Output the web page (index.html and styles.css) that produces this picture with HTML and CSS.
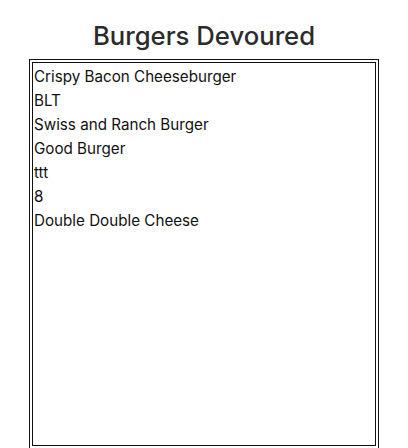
FILE: index.html
```html
<!DOCTYPE html>
<html>
<head>
<meta charset="utf-8">
<link rel="stylesheet" href="styles.css">
</head>
<body>
<h1 class="title">Burgers Devoured</h1>
<div class="outer">
  <div class="inner">
    <ul class="list">
      <li>Crispy Bacon Cheeseburger</li>
      <li>BLT</li>
      <li>Swiss and Ranch Burger</li>
      <li>Good Burger</li>
      <li>ttt</li>
      <li>8</li>
      <li>Double Double Cheese</li>
    </ul>
  </div>
</div>
</body>
</html>
```
FILE: styles.css
```css
html, body {
  margin: 0;
  padding: 0;
  background: #fff;
}
body {
  font-family: Inter, "Liberation Sans", sans-serif;
  color: #000;
  display: flex;
  flex-direction: column;
  align-items: center;
  overflow: hidden;
}
.title {
  margin: 20px 0 0 0;
  font-size: 25.7px;
  font-weight: 500;
  color: #2b2b2b;
  line-height: 32px;
  height: 39px;
}
.outer {
  width: 344px;
  border: 1px solid #111;
  padding: 2px;
  height: 384px;
}
.inner {
  border: 1px solid #111;
  height: 100%;
  box-sizing: border-box;
  padding: 2px 1px 0 1px;
}
.list {
  list-style: none;
  margin: 0;
  padding: 0;
}
.list li {
  font-size: 15.2px;
  line-height: 24px;
  height: 24px;
  color: #111;
}
```
